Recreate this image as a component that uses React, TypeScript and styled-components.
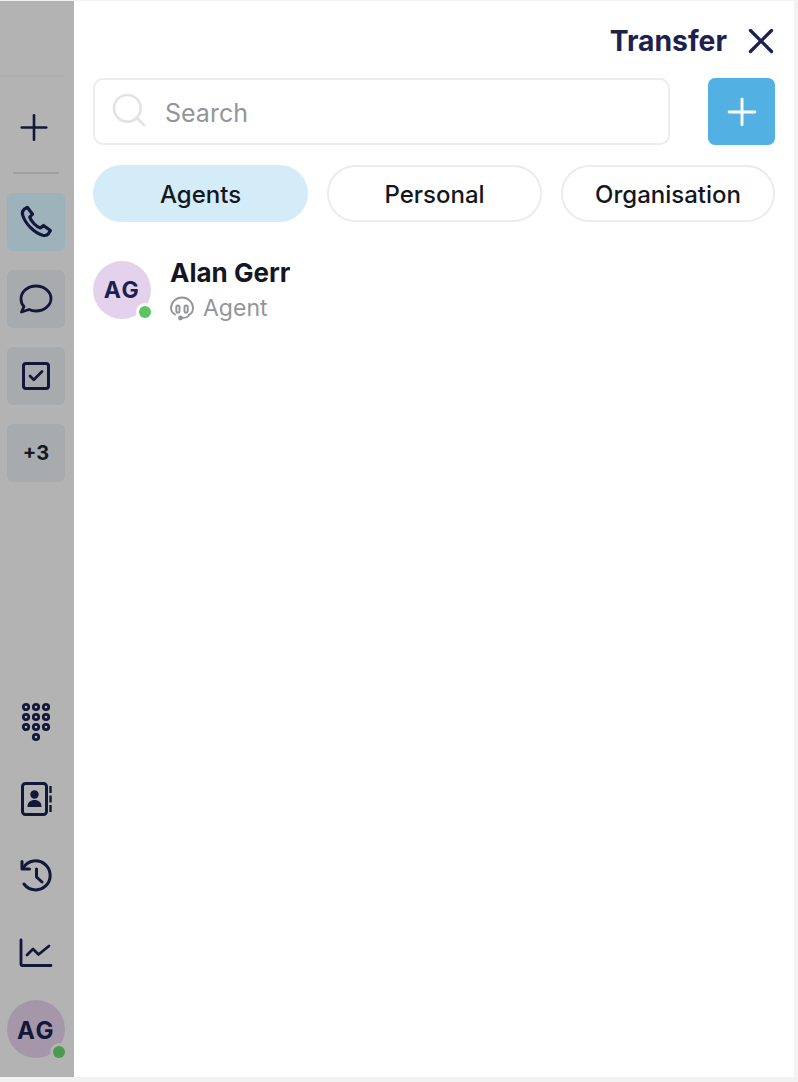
import styled, { createGlobalStyle } from 'styled-components';
import { Check, Plus, Search, X } from 'lucide-react';

const navy = '#1b2150';
const dimmedNavy = '#13173a';

const GlobalStyle = createGlobalStyle`
  html, body {
    margin: 0;
    padding: 0;
    background: #f2f2f3;
  }
  * {
    box-sizing: border-box;
  }
  body {
    font-family: Inter, "Noto Sans", sans-serif;
  }
`;

const Page = styled.div`
  width: 798px;
  height: 1082px;
  padding: 1px 0 5px;
`;

const Frame = styled.div`
  display: flex;
  width: 794px;
  height: 100%;
`;

const Sidebar = styled.nav`
  width: 74px;
  flex-shrink: 0;
  padding-right: 2px;
  display: flex;
  flex-direction: column;
  align-items: center;
  background: #b3b3b3;
  color: ${dimmedNavy};
`;

const TopSlot = styled.div`
  align-self: flex-start;
  width: 64px;
  height: 76px;
  border-bottom: 2px solid #acacac;
`;

const AddCall = styled.div`
  height: 97px;
  width: 46px;
  padding: 5px 4px 0 0;
  display: flex;
  align-items: center;
  justify-content: center;
  border-bottom: 2px solid #a0a0a0;
`;

const TabList = styled.div`
  display: flex;
  flex-direction: column;
  gap: 19px;
  margin-top: 19px;
`;

const Tab = styled.div<{ $active?: boolean }>`
  width: 58px;
  height: 58px;
  border-radius: 6px;
  display: flex;
  align-items: center;
  justify-content: center;
  background: ${(p) => (p.$active ? '#9eb2bc' : '#a8abae')};
  font-size: 20px;
  font-weight: 700;
`;

const MoreCount = styled.span`
  color: #14171f;
`;

const BottomTools = styled.div`
  margin-top: auto;
  padding-bottom: 19px;
  display: flex;
  flex-direction: column;
  align-items: center;
`;

const ToolList = styled.div`
  display: flex;
  flex-direction: column;
  margin-bottom: 9px;
`;

const ToolSlot = styled.div`
  width: 58px;
  height: 77px;
  display: flex;
  align-items: center;
  justify-content: center;
`;

const Avatar = styled.div<{ $bg: string; $ring: string }>`
  position: relative;
  width: 58px;
  height: 58px;
  flex-shrink: 0;
  border-radius: 50%;
  background: ${(p) => p.$bg};
  color: ${navy};
  display: flex;
  align-items: center;
  justify-content: center;
  font-size: 23px;
  font-weight: 700;
  letter-spacing: 1.5px;

  &::after {
    content: '';
    position: absolute;
    right: 0;
    bottom: 1px;
    width: 12px;
    height: 12px;
    border-radius: 50%;
    background: #5cc461;
    box-shadow: 0 0 0 3px ${(p) => p.$ring};
  }
`;

const SideAvatar = styled(Avatar)`
  color: ${dimmedNavy};
  font-size: 24px;
  padding-top: 3px;

  &::after {
    bottom: 0;
    background: #4c9a50;
  }
`;

const Panel = styled.main`
  flex: 1;
  background: #fff;
  padding: 0 19px;
  display: flex;
  flex-direction: column;
`;

const Header = styled.header`
  height: 77px;
  padding-top: 2px;
  display: flex;
  align-items: center;
  justify-content: flex-end;
  gap: 13px;
`;

const Title = styled.h1`
  margin: 0;
  font-size: 28.3px;
  font-weight: 700;
  color: ${navy};
`;

const CloseButton = styled.div`
  display: flex;
  color: ${navy};
  margin-right: -7px;
`;

const SearchRow = styled.div`
  display: flex;
  justify-content: space-between;
  margin-bottom: 20px;
`;

const SearchBox = styled.div`
  width: 577px;
  height: 67px;
  border: 2px solid #ececec;
  border-radius: 10px;
  display: flex;
  align-items: center;
  gap: 16px;
  padding-left: 14px;
  color: #e2e3e3;
`;

const SearchGlyph = styled.span`
  display: flex;
  margin-top: -3px;
`;

const SearchText = styled.span`
  color: #929699;
  font-size: 25px;
  padding-top: 2px;
`;

const AddButton = styled.div`
  width: 67px;
  height: 67px;
  border-radius: 7px;
  background: #53b0e2;
  color: #fff;
  display: flex;
  align-items: center;
  justify-content: center;
`;

const Filters = styled.div`
  display: grid;
  grid-template-columns: 215px 215px 214px;
  gap: 19px;
  margin-bottom: 36px;
`;

const Filter = styled.div<{ $active?: boolean }>`
  height: 57px;
  padding-top: 2px;
  border-radius: 29px;
  border: 2px solid ${(p) => (p.$active ? '#d3ecf8' : '#ececec')};
  background: ${(p) => (p.$active ? '#d3ecf8' : '#fff')};
  color: #14171f;
  display: flex;
  align-items: center;
  justify-content: center;
  font-size: 24px;
  font-weight: 500;
`;

const ContactRow = styled.div`
  display: flex;
  align-items: center;
  gap: 19px;
`;

const ContactText = styled.div`
  display: flex;
  flex-direction: column;
  gap: 6px;
`;

const ContactName = styled.div`
  font-size: 26px;
  font-weight: 700;
  line-height: 30px;
  color: #14171f;
`;

const ContactRole = styled.div`
  display: flex;
  align-items: center;
  gap: 9px;
  font-size: 23px;
  line-height: 28px;
  color: #929699;
`;

const PhoneIcon = () => (
  <svg width="36" height="36" viewBox="0 0 24 24" fill="none" stroke="currentColor" strokeWidth="2.100" strokeLinejoin="round">
    <path d="M6.2 2.2 4 3.6c-1.3 1-1.3 2.4-.8 4 1.6 5.4 7.4 11.600 13.200 13.200 1.600.4 3 .2 3.900-1l1.300-2.100-4.600-3.400-2.100 1.700c-2.500-.6-6.300-4.500-7.100-7.300l1.900-1.900z" />
  </svg>
);

const ChatIcon = () => (
  <svg width="34" height="32" viewBox="0 0 34 32" fill="none" stroke="currentColor" strokeWidth="2.800" strokeLinejoin="round">
    <path d="M2 16C2 8.500 9 3 17 3s15 5.500 15 12.500S25 28 17 28c-2.500 0-5-.5-7-1.500L2.500 29 5 23.500C3 21.500 2 19 2 16z" />
  </svg>
);

const CheckBox = styled.div`
  width: 28px;
  height: 28px;
  border: 3px solid ${dimmedNavy};
  border-radius: 4px;
  display: flex;
  align-items: center;
  justify-content: center;
`;

const TaskIcon = () => (
  <CheckBox>
    <Check size={18} strokeWidth={3.600} />
  </CheckBox>
);

const DialpadIcon = () => {
  const dots: [number, number][] = [];
  for (let row = 0; row < 3; row++) {
    for (let col = 0; col < 3; col++) dots.push([5 + col * 10, 5 + row * 10]);
  }
  dots.push([15, 35]);
  return (
    <svg width="30" height="40" viewBox="0 0 30 40" fill="none" stroke="currentColor" strokeWidth="2.800">
      {dots.map(([cx, cy]) => (
        <circle key={`${cx}-${cy}`} cx={cx} cy={cy} r="2.700" />
      ))}
    </svg>
  );
};

const ContactsIcon = () => (
  <svg width="32" height="34" viewBox="0 0 32 34" fill="none">
    <rect x="2.500" y="1.500" width="24" height="31" rx="3" stroke="currentColor" strokeWidth="3" />
    <circle cx="14.500" cy="12.500" r="4.200" fill="currentColor" />
    <path d="M7.500 25c0-5 3-7 7-7s7 2 7 7z" fill="currentColor" />
    <path d="M30.500 4v7M30.500 13.500v7M30.500 23v7" stroke="currentColor" strokeWidth="2.400" />
  </svg>
);

const HistoryIcon = () => (
  <svg width="34" height="34" viewBox="0 0 34 34" fill="none" stroke="currentColor" strokeWidth="3" strokeLinecap="round" strokeLinejoin="round">
    <path d="M4.500 8.500A14.500 14.500 0 1 1 5 25" />
    <path d="M3 2.500v7.500h7.500" />
    <path d="M17.500 10v8l5.500 5" />
  </svg>
);

const StatsIcon = () => (
  <svg width="34" height="30" viewBox="0 0 34 30" fill="none" stroke="currentColor" strokeWidth="2.800" strokeLinecap="round" strokeLinejoin="round">
    <path d="M2 2v24a1.500 1.500 0 0 0 1.500 1.500H32" />
    <path d="M8 17l6-6 5.500 5.500L30 8" />
  </svg>
);

const HeadsetIcon = () => (
  <svg width="24" height="25" viewBox="0 0 24 25" fill="none" stroke="#929699" strokeWidth="1.900" strokeLinecap="round">
    <path d="M5 18.500C2.500 17 1 15 1 12a11 10.500 0 0 1 22 0c0 3-1.500 5.500-4 6.800" />
    <rect x="6.300" y="9.500" width="3.200" height="7" rx="1.600" />
    <rect x="14.500" y="9.500" width="3.200" height="7" rx="1.600" />
    <path d="M19 19c-1 2.500-3 3-7 3" />
    <circle cx="10.500" cy="22" r="1.500" fill="#929699" />
  </svg>
);

const filters = ['Agents', 'Personal', 'Organisation'];

export default function App() {
  return (
    <Page>
      <GlobalStyle />
      <Frame>
        <Sidebar>
          <TopSlot />
          <AddCall>
            <Plus size={53} strokeWidth={1.500} />
          </AddCall>
          <TabList>
            <Tab $active>
              <PhoneIcon />
            </Tab>
            <Tab>
              <ChatIcon />
            </Tab>
            <Tab>
              <TaskIcon />
            </Tab>
            <Tab>
              <MoreCount>+3</MoreCount>
            </Tab>
          </TabList>
          <BottomTools>
            <ToolList>
              <ToolSlot>
                <DialpadIcon />
              </ToolSlot>
              <ToolSlot>
                <ContactsIcon />
              </ToolSlot>
              <ToolSlot>
                <HistoryIcon />
              </ToolSlot>
              <ToolSlot>
                <StatsIcon />
              </ToolSlot>
            </ToolList>
            <SideAvatar $bg="#a597a9" $ring="#b3b3b3">
              AG
            </SideAvatar>
          </BottomTools>
        </Sidebar>
        <Panel>
          <Header>
            <Title>Transfer</Title>
            <CloseButton>
              <X size={42} strokeWidth={1.900} />
            </CloseButton>
          </Header>
          <SearchRow>
            <SearchBox>
              <SearchGlyph>
                <Search size={40} strokeWidth={1.600} />
              </SearchGlyph>
              <SearchText>Search</SearchText>
            </SearchBox>
            <AddButton>
              <Plus size={44} strokeWidth={1.600} />
            </AddButton>
          </SearchRow>
          <Filters>
            {filters.map((name) => (
              <Filter key={name} $active={name === 'Agents'}>
                {name}
              </Filter>
            ))}
          </Filters>
          <ContactRow>
            <Avatar $bg="#e4d2ec" $ring="#fff">
              AG
            </Avatar>
            <ContactText>
              <ContactName>Alan Gerr</ContactName>
              <ContactRole>
                <HeadsetIcon />
                Agent
              </ContactRole>
            </ContactText>
          </ContactRow>
        </Panel>
      </Frame>
    </Page>
  );
}
